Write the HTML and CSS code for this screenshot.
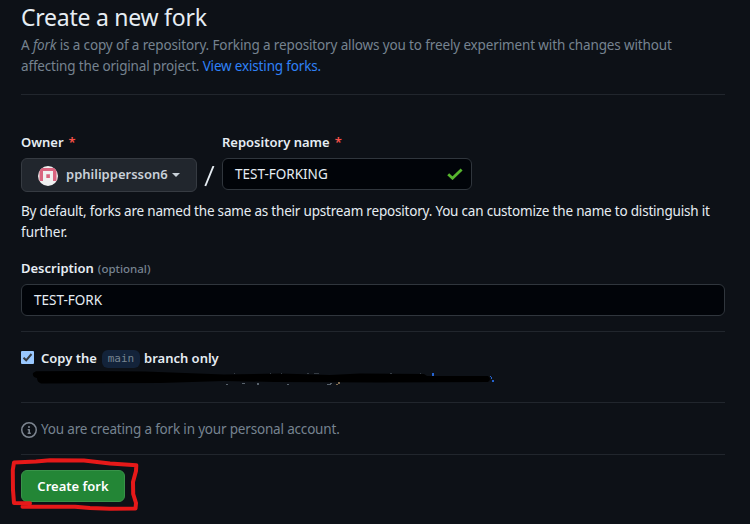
FILE: index.html
```html
<!DOCTYPE html>
<html lang="en">
<head>
<meta charset="utf-8">
<title>Create a new fork</title>
<link rel="stylesheet" href="styles.css">
</head>
<body>
<main class="page">
  <header class="intro">
    <h1 class="title">Create a new fork</h1>
    <p class="lead"><span class="lead-first">A <em>fork</em> is a copy of a repository. Forking a repository allows you to freely experiment with changes without</span><br><span class="lead-second">affecting the original project. <a class="link">View existing forks.</a></span></p>
  </header>
  <section class="names">
    <div class="field owner">
      <div class="label"><span class="owner-label">Owner</span><span class="star">*</span></div>
      <div class="select">
        <svg class="avatar" width="20" height="20" viewBox="0 0 20 20"><defs><clipPath id="round"><circle cx="10" cy="10" r="10"/></clipPath></defs><g clip-path="url(#round)"><path fill="#f0f0f0" d="M0 0h20v20H0z"/><path fill="#d9647f" d="M1.5 2h17v13H15V5H5v10H1.5zM8.3 8.3h3.6v3.6H8.3z"/></g></svg>
        <span class="user">pphilippersson6</span>
        <span class="caret"></span>
      </div>
    </div>
    <svg class="slash" width="11" height="22" viewBox="0 0 11 22"><path d="M1.3 20 9.5 0" stroke="#e6edf3" stroke-width="1.9"/></svg>
    <div class="field repo">
      <div class="label"><span class="repo-label">Repository name</span><span class="star">*</span></div>
      <div class="input"><span class="repo-value">TEST-FORKING</span>
        <svg width="16" height="12" viewBox="0 0 16 12"><path d="M1.2 6.2 5.5 10.2 14.6 1.4" fill="none" stroke="#57b52e" stroke-width="2.8"/></svg>
      </div>
    </div>
  </section>
  <p class="note"><span class="note-first">By default, forks are named the same as their upstream repository. You can customize the name to distinguish it</span><br>further.</p>
  <section class="description">
    <div class="label"><span class="desc-label">Description</span><span class="optional">(optional)</span></div>
    <div class="input"><span class="desc-value">TEST-FORK</span></div>
  </section>
  <section class="branch">
    <svg class="check" width="13" height="13" viewBox="0 0 13 13"><rect width="13" height="13" rx="1" fill="#99c8ff"/><path d="M2.5 6.7 5.2 9.3 10.5 3" fill="none" stroke="#353a41" stroke-width="2"/></svg>
    <span class="copy">Copy the</span><code class="ref">main</code><span class="only">branch only</span>
    <svg class="redaction" width="470" height="18" viewBox="30 369 470 18">
      <path fill="#000" d="M36 371.2 Q100 370.5 145 371.5 L224 374.5 L280 373.5 L330 375 L360 373.5 L424 374 L427 376 L488 376 Q492 379 488 382 L380 382.5 L275 382 L224 381 L160 383 L41 383.5 Q37 382 37 378 Q32 377 33 373 Z"/>
      <path fill="#59636d" d="M226 384h2v1h-2zM242 383h3v1h-3zM257 383h2v2h-2zM287 384h2v1h-2zM327 384h4v1h-4zM330 383h2v1h-2z"/>
      <path fill="#353c44" d="M234 373h1v1h-1zM270 373h1v1h-1zM281 373h1v1h-1zM307 373h2v1h-2zM314 373h5v1h-5zM390 373h2v1h-2zM420 373h1v1h-1z"/>
      <path fill="#806c50" d="M336 384h2v1h-2zM338 382h2v2h-2z"/>
      <path fill="#2563cf" d="M432 373h2v3h-2zM490 376h1v1h-1zM491 377h1v2h-1zM492 380h2v2h-2z"/>
    </svg>
  </section>
  <section class="info">
    <svg width="16" height="16" viewBox="0 0 16 16" fill="#7d8590"><path d="M0 8a8 8 0 1 1 16 0A8 8 0 0 1 0 8Zm8-6.5a6.5 6.5 0 1 0 0 13 6.5 6.5 0 0 0 0-13ZM6.5 7.75A.75.75 0 0 1 7.25 7h1a.75.75 0 0 1 .75.75v2.75h.25a.75.75 0 0 1 0 1.5h-2a.75.75 0 0 1 0-1.5h.25v-2h-.25a.75.75 0 0 1-.75-.75ZM8 6a1 1 0 1 1 0-2 1 1 0 0 1 0 2Z"/></svg>
    <span>You are creating a fork in your personal account.</span>
  </section>
  <div class="actions">
    <div class="create"><span>Create fork</span>
      <svg class="marker" width="132" height="56" viewBox="8 457 132 56"><path fill="none" stroke="#e61919" stroke-width="4" stroke-linecap="round" stroke-linejoin="round" d="M30 503.3 14 503 13 490 12.8 470 14 462.5 36 461.5 50 460.3 84 460.5 110 463.5 136.3 465.2 136 471 133 482 133.2 494 136 503 135.5 508.5 110 508.8 90 508 75 506.8 22.5 506.7"/></svg>
    </div>
  </div>
</main>
</body>
</html>
```
FILE: styles.css
```css
* { box-sizing: border-box; }
body {
  margin: 0;
  background: #0d1117;
  color: #e6edf3;
  font: 13.5px/21px "Noto Sans", sans-serif;
}
.page { width: 704px; height: 524px; margin-left: 21px; }
h1, p { margin: 0; font-weight: 400; }
.intro { height: 95px; border-bottom: 1px solid #21262d; white-space: nowrap; }
.title { height: 35px; font-size: 23px; line-height: 35px; letter-spacing: -.25px; }
.lead { color: #768390; }
.lead-first { letter-spacing: -.135px; }
.lead-second { letter-spacing: -.17px; }
.link { color: #2f81f7; }
.names { display: flex; height: 106px; padding-top: 37px; }
.label { display: flex; height: 26px; font-size: 13px; font-weight: 600; white-space: nowrap; }
.star { color: #f85149; margin-left: 5px; }
.select {
  display: flex; align-items: center; width: 176px; height: 34px; padding-left: 16px;
  background: #21262d; border: 1px solid #363b42; border-radius: 6px; color: #c9d1d9;
}
.user { margin: -2px 0 0 8px; width: 102px; font-size: 13px; font-weight: 600; white-space: nowrap; }
.avatar { margin-top: 2px; }
.caret { margin-left: 4px; border: 4px solid transparent; border-top-color: #c9d1d9; border-bottom: 0; }
.slash { margin: 34px 7px 0 7px; }
.input {
  display: flex; align-items: center; justify-content: space-between; height: 32px; padding: 0 8px 0 12px;
  background: #010409; border: 1px solid #30363d; border-radius: 6px;
}
.repo { width: 250px; }
.note { height: 57px; white-space: nowrap; }
.note-first { letter-spacing: -.2px; }
.description { height: 74px; border-bottom: 1px solid #21262d; }
.optional { margin-left: 4px; font-size: 11.5px; font-weight: 500; color: #768390; }
.branch {
  position: relative; display: flex; align-items: flex-start; height: 71px; padding-top: 16px;
  border-bottom: 1px solid #21262d; font-size: 13px; font-weight: 600; white-space: nowrap;
}
.check { margin: 3px 7px 0 0; }
.copy { width: 57px; }
.ref {
  width: 38px; height: 18px; margin: 2px 4px 0 4px; border-radius: 6px; background: #13233a; color: #768390;
  font: 11px/18px "DejaVu Sans Mono", monospace; text-align: center;
}
.redaction { position: absolute; left: 9px; top: 37px; }
.info { display: flex; align-items: center; height: 52px; padding-top: 3px; gap: 4px; border-bottom: 1px solid #21262d; color: #768390; white-space: nowrap; }
.info span { margin-top: -2px; letter-spacing: -.18px; }
.actions { padding-top: 15px; }
.create {
  position: relative; display: flex; align-items: center; justify-content: center; width: 104px; height: 32px;
  background: #238636; border: 1px solid #389349; border-radius: 6px; color: #fff; font-size: 13px; font-weight: 600;
}
.marker { position: absolute; left: -14px; top: -14px; }
```
